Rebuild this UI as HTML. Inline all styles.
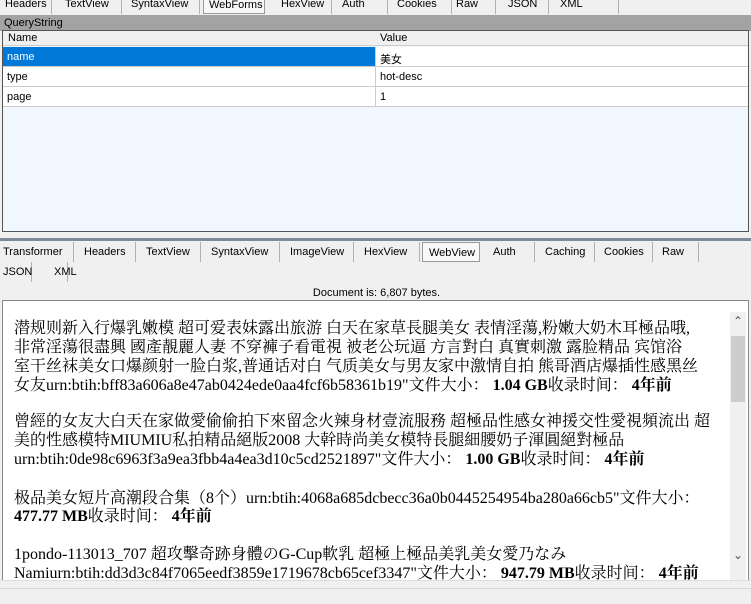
<!DOCTYPE html>
<html><head><meta charset="utf-8"><style>
*{margin:0;padding:0;box-sizing:border-box}
body{width:751px;height:604px;background:#f0f0f0;position:relative;overflow:hidden;font-family:"Liberation Sans","Noto Sans CJK SC",sans-serif;font-size:11px;color:#000}
.a{position:absolute}
.tab{position:absolute;height:20px;line-height:20px;font-size:11px;border-right:1px solid #b0b0b0;padding-left:5px}
.sel{border:1px solid #999;background:#f8f8f8}
.t{position:absolute;left:14px;font-family:"Liberation Serif","Noto Serif CJK SC",serif;font-size:16px;white-space:nowrap}
b{font-weight:bold}
.c{padding:4px 0 0 4px!important}
</style></head><body>
<!-- top tabs -->
<div class="a" style="left:0;top:-6px;width:751px;height:20px">
<div class="tab" style="left:0;width:52px">Headers</div>
<div class="tab" style="left:52px;width:70px;padding-left:13px">TextView</div>
<div class="tab" style="left:122px;width:78px;padding-left:9px">SyntaxView</div>
<div class="tab sel" style="left:203px;width:62px;padding-left:5px">WebForms</div>
<div class="tab" style="left:266px;width:66px;padding-left:15px">HexView</div>
<div class="tab" style="left:332px;width:56px;padding-left:10px">Auth</div>
<div class="tab" style="left:388px;width:64px;padding-left:9px">Cookies</div>
<div class="tab" style="left:452px;width:44px;padding-left:4px">Raw</div>
<div class="tab" style="left:496px;width:53px;padding-left:12px">JSON</div>
<div class="tab" style="left:549px;width:70px;padding-left:11px">XML</div>
</div>
<div class="a" style="left:0;top:15px;width:751px;height:16px;background:#a3a3a3;padding-left:4px;line-height:16px">QueryString</div>
<div class="a" style="left:2px;top:30px;width:747px;height:202px;background:#f0f7ff;border:1px solid #555"></div>
<div class="a" style="left:3px;top:31px;width:745px;height:15px;background:#f0f0f0;border-bottom:1px solid #ccc"></div>
<div class="a" style="left:8px;top:32px">Name</div><div class="a" style="left:380px;top:32px">Value</div>
<div class="a c" style="left:3px;top:47px;width:372px;height:19px;background:#0078d7;color:#fff">name</div>
<div class="a c" style="left:375px;top:47px;width:373px;height:19px;background:#fff;border-left:1px solid #ccc">美女</div>
<div class="a c" style="left:3px;top:67px;width:372px;height:19px;background:#fff">type</div>
<div class="a c" style="left:375px;top:67px;width:373px;height:19px;background:#fff;border-left:1px solid #ccc">hot-desc</div>
<div class="a c" style="left:3px;top:87px;width:372px;height:19px;background:#fff">page</div>
<div class="a c" style="left:375px;top:87px;width:373px;height:19px;background:#fff;border-left:1px solid #ccc">1</div>
<div class="a" style="left:3px;top:66px;width:745px;height:1px;background:#ccc"></div>
<div class="a" style="left:3px;top:86px;width:745px;height:1px;background:#ccc"></div>
<div class="a" style="left:3px;top:106px;width:745px;height:1px;background:#ccc"></div>
<!-- splitter -->
<div class="a" style="left:0;top:238px;width:751px;height:3px;background:#7d8b98"></div>
<div class="a" style="left:0;top:242px;width:751px;height:20px">
<div class="tab" style="left:0;width:74px;padding-left:3px">Transformer</div>
<div class="tab" style="left:74px;width:62px;padding-left:10px">Headers</div>
<div class="tab" style="left:136px;width:65px;padding-left:10px">TextView</div>
<div class="tab" style="left:201px;width:79px;padding-left:10px">SyntaxView</div>
<div class="tab" style="left:280px;width:74px;padding-left:10px">ImageView</div>
<div class="tab" style="left:354px;width:66px;padding-left:10px">HexView</div>
<div class="tab sel" style="left:422px;width:58px;padding-left:6px">WebView</div>
<div class="tab" style="left:481px;width:54px;padding-left:12px">Auth</div>
<div class="tab" style="left:535px;width:60px;padding-left:10px">Caching</div>
<div class="tab" style="left:595px;width:58px;padding-left:9px">Cookies</div>
<div class="tab" style="left:653px;width:46px;padding-left:9px">Raw</div>
</div>
<div class="a" style="left:0;top:262px;width:751px;height:20px">
<div class="tab" style="left:0;width:32px;padding-left:3px">JSON</div>
<div class="tab" style="left:32px;width:36px;padding-left:22px">XML</div>
</div>
<div class="a" style="left:0;top:286px;width:751px;text-align:center;line-height:14px;padding-left:2px">Document is: 6,807 bytes.</div>
<!-- web box -->
<div class="a" style="left:2px;top:300px;width:747px;height:290px;background:#fff;border:1px solid #888;border-bottom:none"></div>
<div class="a" style="left:730px;top:312px;width:16px;height:272px;background:#f0f0f0"></div>
<div class="a" style="left:731px;top:336px;width:14px;height:66px;background:#cdcdcd"></div>
<div class="a" style="left:733px;top:314px;font-size:12px;color:#555">&#8963;</div>
<div class="a" style="left:733px;top:548px;font-size:12px;color:#555">&#8964;</div>
<div class="t" style="top:315px">潜规则新入行爆乳嫩模 超可爱表妹露出旅游 白天在家草長腿美女 表情淫蕩,粉嫩大奶木耳極品哦,</div>
<div class="t" style="top:334px">非常淫蕩很盡興 國產靚麗人妻 不穿褲子看電視 被老公玩逼 方言對白 真實刺激 露脸精品 宾馆浴</div>
<div class="t" style="top:353px">室干丝袜美女口爆颜射一脸白浆,普通话对白 气质美女与男友家中激情自拍 熊哥酒店爆插性感黑丝</div>
<div class="t" style="top:372px">女友urn:btih:bff83a606a8e47ab0424ede0aa4fcf6b58361b19"文件大小： <b>1.04 GB</b>收录时间： <b>4年前</b></div>
<div class="t" style="top:408px">曾經的女友大白天在家做愛偷偷拍下來留念火辣身材壹流服務 超極品性感女神援交性愛視頻流出 超</div>
<div class="t" style="top:427px">美的性感模特MIUMIU私拍精品絕版2008 大幹時尚美女模特長腿細腰奶子渾圓絕對極品</div>
<div class="t" style="top:446px">urn:btih:0de98c6963f3a9ea3fbb4a4ea3d10c5cd2521897"文件大小： <b>1.00 GB</b>收录时间： <b>4年前</b></div>
<div class="t" style="top:485px">极品美女短片高潮段合集（8个）urn:btih:4068a685dcbecc36a0b0445254954ba280a66cb5"文件大小：</div>
<div class="t" style="top:503px"><b>477.77 MB</b>收录时间： <b>4年前</b></div>
<div class="t" style="top:541px">1pondo-113013_707 超攻擊奇跡身體のG-Cup軟乳 超極上極品美乳美女愛乃なみ</div>
<div class="t" style="top:560px">Namiurn:btih:dd3d3c84f7065eedf3859e1719678cb65cef3347"文件大小： <b>947.79 MB</b>收录时间： <b>4年前</b></div>
<div class="a" style="left:0;top:580px;width:751px;height:24px;background:#f0f0f0;border-top:1px solid #ddd"></div>
<div class="a" style="left:0;top:588px;width:751px;height:1px;background:#d8d8d8"></div>
</body></html>
